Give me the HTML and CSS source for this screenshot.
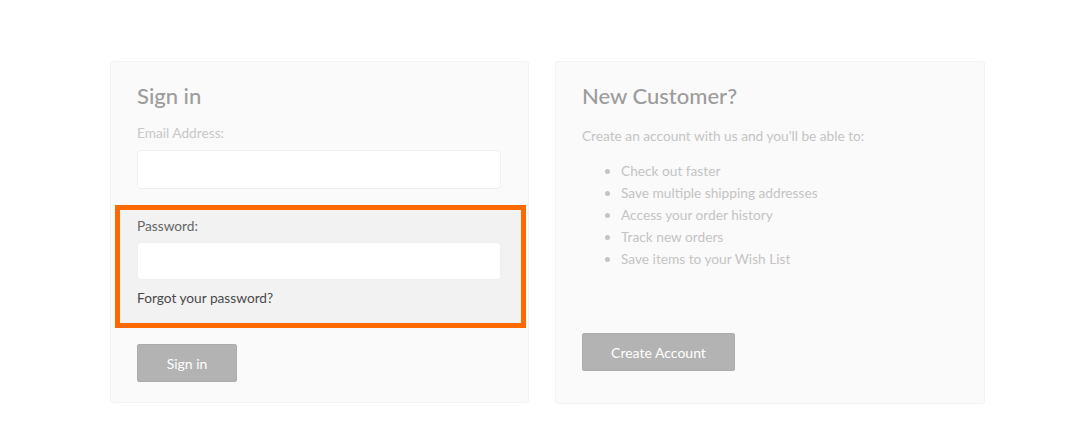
FILE: index.html
```html
<!DOCTYPE html>
<html lang="en">
<head>
<meta charset="utf-8">
<title>Sign in</title>
<link rel="stylesheet" href="styles.css">
</head>
<body>
<main class="page">
  <section class="card card-signin">
    <h2 class="card-title">Sign in</h2>
    <label class="label label-faded" for="email">Email Address:</label>
    <input class="field" id="email" type="text">
    <div class="highlight">
      <label class="label label-strong" for="password">Password:</label>
      <input class="field" id="password" type="password">
      <a class="forgot" href="#">Forgot your password?</a>
    </div>
    <button class="btn btn-signin" type="button">Sign in</button>
  </section>
  <section class="card card-new">
    <h2 class="card-title">New Customer?</h2>
    <p class="intro">Create an account with us and you'll be able to:</p>
    <ul class="benefits">
      <li>Check out faster</li>
      <li>Save multiple shipping addresses</li>
      <li>Access your order history</li>
      <li>Track new orders</li>
      <li>Save items to your Wish List</li>
    </ul>
    <button class="btn btn-create" type="button">Create Account</button>
  </section>
</main>
</body>
</html>
```
FILE: styles.css
```css
* { box-sizing: border-box; }
html, body { margin: 0; padding: 0; background: #ffffff; }
body {
  font-family: "Lato", "Liberation Sans", sans-serif;
  font-size: 13.7px;
  color: #c4c4c4;
}
.page {
  display: grid;
  grid-template-columns: 419px 430px;
  column-gap: 26px;
  padding: 61px 0 0 110px;
  align-items: start;
}
.card {
  background: #fafafa;
  border: 1px solid #f3f3f3;
  border-radius: 3px;
  display: flex;
  flex-direction: column;
  height: 342px;
}
.card-signin { padding: 21px 27px 0 26px; }
.card-new { padding: 21px 27px 0 26px; height: 343px; }
.card-title {
  margin: 0;
  font-size: 22px;
  line-height: 26px;
  font-weight: 500;
  color: #9c9c9c;
}
.label {
  display: block;
  line-height: 20px;
}
.label-faded { color: #c8c8c8; margin-top: 14px; }
.label-strong { color: #666666; }
.field {
  display: block;
  width: 364px;
  height: 39px;
  margin-top: 7px;
  background: #ffffff;
  border: 1px solid #efefef;
  border-radius: 4px;
  font: inherit;
}
.highlight {
  margin: 16px -25px 0 -22px;
  border: 5px solid #ff6a00;
  background: #f2f2f2;
  padding: 6px 20px 15px 17px;
}
.highlight .field { height: 38px; margin-top: 6px; }
.forgot {
  display: block;
  margin-top: 8px;
  line-height: 20px;
  color: #4a4a4a;
  text-decoration: none;
}
.btn {
  height: 38px;
  background: #b3b3b3;
  color: #ffffff;
  border: 1px solid #acacac;
  border-radius: 2px;
  font: inherit;
  font-size: 14px;
  padding: 0;
}
.btn-signin { width: 100px; margin-top: 16px; }
.intro { margin: 17px 0 0; line-height: 20px; }
.benefits {
  margin: 14px 0 0;
  padding-left: 39px;
  line-height: 22px;
}
.btn-create { width: 153px; margin-top: 63px; }
```
